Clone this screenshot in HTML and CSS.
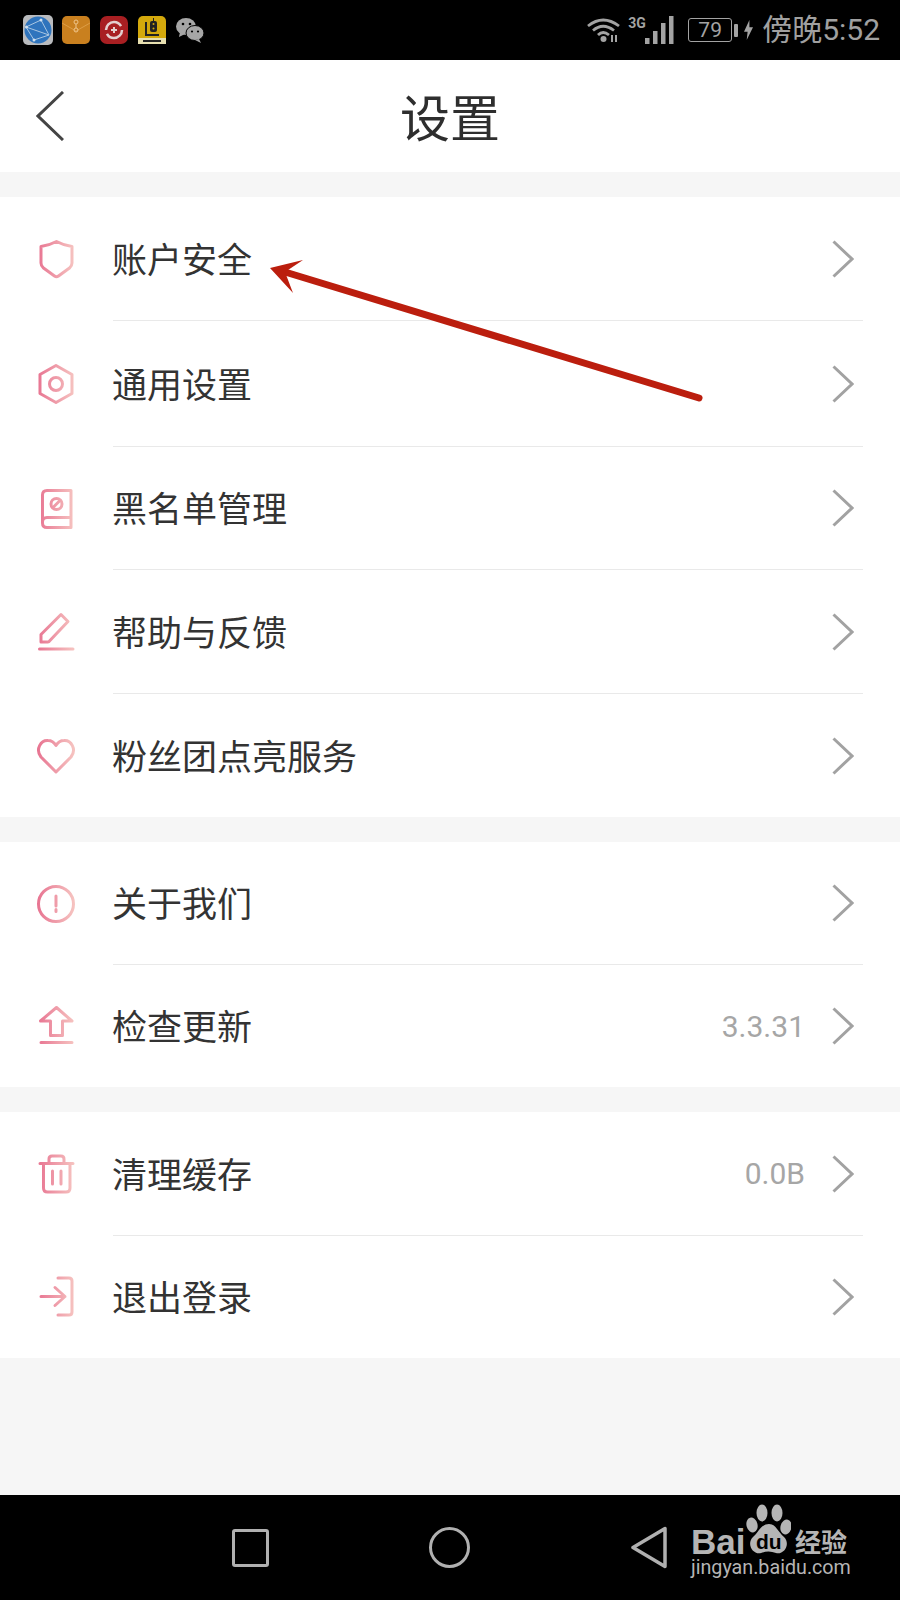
FILE: index.html
```html
<!DOCTYPE html>
<html lang="zh-CN">
<head>
<meta charset="utf-8">
<title>设置</title>
<link rel="stylesheet" href="styles.css">
</head>
<body>
<div class="page">
  <div class="statusbar">
    <div class="apps">
      <svg class="app app-a" viewBox="0 0 30 30"><rect width="30" height="30" rx="5" fill="#b9bbbe"/><circle cx="15" cy="15" r="13.500" fill="#2f74bd"/><path d="M3 12 L18 5 L26 20 L11 25 Z M3 12 L26 20" fill="none" stroke="#a9c6e2" stroke-width="1"/><circle cx="18" cy="5" r="1.500" fill="#cfe0f0"/><circle cx="3.500" cy="12" r="1.500" fill="#cfe0f0"/><circle cx="11" cy="25" r="1.500" fill="#cfe0f0"/></svg>
      <svg class="app app-b" viewBox="0 0 28 28"><rect width="28" height="28" rx="5" fill="#c9801f"/><path d="M0 7 L14 15 L28 7" fill="none" stroke="#dd9d46" stroke-width="1"/><circle cx="14" cy="6" r="2" fill="none" stroke="#eec48a"/><circle cx="14" cy="14" r="2" fill="none" stroke="#eec48a"/><path d="M14 8v4" stroke="#eec48a"/></svg>
      <svg class="app app-c" viewBox="0 0 28 28"><rect width="28" height="28" rx="7" fill="#a81f22"/><circle cx="14" cy="14" r="8" fill="none" stroke="#e4cfcf" stroke-width="2.500" stroke-dasharray="21 4"/><path d="M11 14h6M14 11v6" stroke="#e4cfcf" stroke-width="2"/></svg>
      <svg class="app app-d" viewBox="0 0 28 28"><rect width="28" height="28" rx="5" fill="#d4a90c"/><path d="M8 6V19H21" fill="none" stroke="#222" stroke-width="2"/><rect x="12" y="5" width="7" height="11" rx="2" fill="#222"/><path d="M15.500 2v3" stroke="#222"/><circle cx="15.500" cy="8" r="1" fill="#d4a90c"/><circle cx="15.500" cy="12.500" r="1" fill="#d4a90c"/><rect x="0" y="22" width="28" height="6" fill="#e6dfb0"/><rect x="5" y="24" width="18" height="2" fill="#222"/></svg>
      <svg class="app app-e" viewBox="0 0 28 26"><ellipse cx="10" cy="9.500" rx="10" ry="8.500" fill="#a6a6a6"/><path d="M4 15 L3 20 L9 17Z" fill="#a6a6a6"/><ellipse cx="19" cy="16" rx="9" ry="7.500" fill="#a6a6a6" stroke="#000" stroke-width="1"/><path d="M23 22 L25 26 L19 23Z" fill="#a6a6a6"/><circle cx="7" cy="7" r="1.300" fill="#000"/><circle cx="14" cy="7" r="1.300" fill="#000"/><circle cx="16" cy="14.500" r="1.100" fill="#000"/><circle cx="22" cy="14.500" r="1.100" fill="#000"/></svg>
    </div>
    <div class="indicators">
      <svg class="wifi" viewBox="0 0 34 26"><path d="M1 9 Q16 -3 32 9 M6 13.500 Q16 5 27 13.500 M11 18 Q16 13 22 18" fill="none" stroke="#a3a3a3" stroke-width="2.800"/><circle cx="16.500" cy="22" r="3" fill="#a3a3a3"/><path d="M25 18v7M29 18v7" stroke="#a3a3a3" stroke-width="2"/></svg>
      <span class="net">3G</span>
      <svg class="signal" viewBox="0 0 29 28"><rect x="0" y="22" width="4.500" height="6" fill="#a3a3a3"/><rect x="8" y="15" width="4.500" height="13" fill="#a3a3a3"/><rect x="16" y="7" width="4.500" height="21" fill="#a3a3a3"/><rect x="24" y="0" width="4.500" height="28" fill="#a3a3a3"/></svg>
      <div class="battery"><span class="battery-level">79</span></div>
      <span class="battery-tip"></span>
      <svg class="bolt" viewBox="0 0 10 22"><path d="M6 0 L0 13 H4 L3 22 L10 8 H6 Z" fill="#a3a3a3"/></svg>
      <span class="clock">傍晚5:52</span>
    </div>
  </div>

  <header class="topbar">
    <svg class="back" viewBox="0 0 28 50"><path d="M27 1 L2 25 L27 49" fill="none" stroke="#444" stroke-width="3"/></svg>
    <h1 class="title">设置</h1>
  </header>

  <section class="group group-a">
    <div class="row">
      <svg class="icon" viewBox="0 0 40 40"><defs><linearGradient id="pink" gradientUnits="userSpaceOnUse" x1="2" y1="0" x2="38" y2="0"><stop offset="0" stop-color="#e87592"/><stop offset="1" stop-color="#f6c3c0"/></linearGradient></defs><path class="ln" d="M20.500 2.500 Q28 6.500 36 7.500 V24 Q36 27 33.500 29 L22.500 37 Q20.500 38.500 18.500 37 L7.500 29 Q5 27 5 24 V7.500 Q13 6.500 20.500 2.500Z"/></svg>
      <div class="row-body"><span class="label">账户安全</span><svg class="chev" viewBox="0 0 22 38"><path d="M1.500 1.500 L20 19 L1.500 36.500"/></svg></div>
    </div>
    <div class="row">
      <svg class="icon" viewBox="0 0 40 40"><path class="ln" d="M20 1.500 L36 10.500 V29.500 L20 38.500 L4 29.500 V10.500Z"/><circle class="ln" cx="20" cy="20" r="6.500"/></svg>
      <div class="row-body"><span class="label">通用设置</span><svg class="chev" viewBox="0 0 22 38"><path d="M1.500 1.500 L20 19 L1.500 36.500"/></svg></div>
    </div>
    <div class="row">
      <svg class="icon" viewBox="0 0 40 40"><path class="ln" d="M35 1.500 H11 Q6.500 1.500 6.500 6 V34 Q6.500 38.500 11 38.500 H35Z M6.500 33 Q6.500 28.500 11 28.500 H35"/><circle class="ln" cx="20.500" cy="15" r="5.500"/><path class="ln" d="M17 18.500 L24 11.500"/></svg>
      <div class="row-body"><span class="label">黑名单管理</span><svg class="chev" viewBox="0 0 22 38"><path d="M1.500 1.500 L20 19 L1.500 36.500"/></svg></div>
    </div>
    <div class="row">
      <svg class="icon" viewBox="0 0 40 40"><path class="ln" d="M25 2.500 L32 9.500 L13.500 29 Q13 30 12 30 H5 V22.500 Z"/><path class="ln" d="M3.500 37 H37"/></svg>
      <div class="row-body"><span class="label">帮助与反馈</span><svg class="chev" viewBox="0 0 22 38"><path d="M1.500 1.500 L20 19 L1.500 36.500"/></svg></div>
    </div>
    <div class="row">
      <svg class="icon" viewBox="0 0 40 40"><path class="ln" d="M20 36 L5 21 C-1 13 5 4 12 4.500 C15.500 4.500 18.500 7 20 9.500 C21.500 7 24.500 4.500 28 4.500 C35 4 41 13 35 21Z"/></svg>
      <div class="row-body"><span class="label">粉丝团点亮服务</span><svg class="chev" viewBox="0 0 22 38"><path d="M1.500 1.500 L20 19 L1.500 36.500"/></svg></div>
    </div>
  </section>

  <section class="group group-b">
    <div class="row">
      <svg class="icon" viewBox="0 0 40 40"><circle class="ln" cx="20" cy="20" r="17.500"/><path class="ln" d="M20 12 V22 M20 25.500 V27.500"/></svg>
      <div class="row-body"><span class="label">关于我们</span><svg class="chev" viewBox="0 0 22 38"><path d="M1.500 1.500 L20 19 L1.500 36.500"/></svg></div>
    </div>
    <div class="row">
      <svg class="icon" viewBox="0 0 40 40"><path class="ln" d="M20.500 1.500 L36 15 H26.500 V29.500 H14.500 V15 H4.500 Z M5 36.500 H36"/></svg>
      <div class="row-body"><span class="label">检查更新</span><span class="value">3.3.31</span><svg class="chev" viewBox="0 0 22 38"><path d="M1.500 1.500 L20 19 L1.500 36.500"/></svg></div>
    </div>
  </section>

  <section class="group group-c">
    <div class="row">
      <svg class="icon" viewBox="0 0 40 40"><path class="ln" d="M4 9.500 H37 M7.500 9.500 V34 Q7.500 38 11.500 38 H30 Q34 38 34 34 V9.500 M13 9.500 V5 Q13 2 16 2 H25 Q28 2 28 5 V9.500 M16.500 17 V30 M25 17 V30"/></svg>
      <div class="row-body"><span class="label">清理缓存</span><span class="value">0.0B</span><svg class="chev" viewBox="0 0 22 38"><path d="M1.500 1.500 L20 19 L1.500 36.500"/></svg></div>
    </div>
    <div class="row">
      <svg class="icon" viewBox="0 0 40 40"><path class="ln" d="M5 19.500 H29 M19 10.500 L29 19.500 L19 28.500 M22 1 H33 Q36 1 36 4 V35 Q36 38 33 38 H22"/></svg>
      <div class="row-body"><span class="label">退出登录</span><svg class="chev" viewBox="0 0 22 38"><path d="M1.500 1.500 L20 19 L1.500 36.500"/></svg></div>
    </div>
  </section>

  <div class="filler"></div>

  <nav class="navbar">
    <span class="nav-square"></span>
    <span class="nav-circle"></span>
    <svg class="nav-back" viewBox="0 0 36 42"><path d="M34 2 V40 L2 21 Z" fill="none" stroke="#b0b0b0" stroke-width="3.500" stroke-linejoin="round"/></svg>
  </nav>

  <div class="watermark">
    <div class="wm-top">
      <span class="wm-bai">Bai</span>
      <svg class="wm-paw" viewBox="0 0 45 52"><ellipse cx="16" cy="10" rx="5.500" ry="8.500" fill="#b5b5b5"/><ellipse cx="31" cy="10" rx="5.500" ry="8.500" fill="#b5b5b5"/><ellipse cx="6" cy="22" rx="5.500" ry="7.500" fill="#b5b5b5" transform="rotate(-15 6 22)"/><ellipse cx="40" cy="24" rx="5.500" ry="7.500" fill="#b5b5b5" transform="rotate(15 40 24)"/><path d="M23 21 C30 21 32 29 38 34 C45 41 38 52 30 50 C25 48 20 48 15 50 C7 52 0 41 7 34 C13 29 15 21 23 21Z" fill="#b5b5b5"/></svg>
      <span class="wm-du">du</span>
      <span class="wm-cn">经验</span>
    </div>
    <span class="wm-url">jingyan.baidu.com</span>
  </div>

  <svg class="arrow" viewBox="0 0 900 1600"><path d="M699 398 L285 272" stroke="#bb1e0e" stroke-width="7" stroke-linecap="round" fill="none"/><path d="M270 268 L303 260 L285 272 L293 293 Z" fill="#bb1e0e"/></svg>
</div>
</body>
</html>
```
FILE: styles.css
```css
* { box-sizing: border-box; }
html, body { margin: 0; padding: 0; }
body { width: 900px; height: 1600px; overflow: hidden; background: #f6f6f6; font-family: "Noto Sans CJK SC", "Noto Sans", sans-serif; }
.page { position: relative; width: 900px; height: 1600px; display: flex; flex-direction: column; background: #f6f6f6; }

.statusbar { height: 60px; background: #000; display: flex; align-items: center; justify-content: space-between; padding: 0 20px 0 23px; flex: none; }
.apps { display: flex; align-items: center; }
.app { display: block; }
.app-a { width: 30px; height: 30px; }
.app-b { width: 28px; height: 28px; margin-left: 9px; }
.app-c { width: 28px; height: 28px; margin-left: 10px; }
.app-d { width: 28px; height: 28px; margin-left: 10px; }
.app-e { width: 28px; height: 26px; margin-left: 10px; }
.indicators { display: flex; align-items: center; color: #a3a3a3; }
.wifi { width: 34px; height: 26px; display: block; }
.net { font: 700 14px/14px "Roboto", sans-serif; margin: -14px 0 0 7px; width: 17px; }
.signal { width: 29px; height: 28px; display: block; }
.battery { width: 44px; height: 24px; margin-left: 14px; border: 1.500px solid #a3a3a3; border-radius: 3px; display: flex; align-items: center; justify-content: center; }
.battery-level { font: 400 21px/21px "Roboto", sans-serif; }
.battery-tip { width: 4px; height: 13px; margin-left: 2px; background: #a3a3a3; border-radius: 1px; }
.bolt { width: 9px; height: 22px; margin-left: 6px; display: block; }
.clock { font: 400 30px/34px "Roboto", "Noto Sans CJK SC", sans-serif; margin-left: 9px; color: #a0a0a0; }

.topbar { height: 112px; background: #fff; display: flex; align-items: center; justify-content: center; position: relative; flex: none; }
.back { position: absolute; left: 36px; top: 31px; width: 28px; height: 50px; }
.title { margin: 0 0 2px; font-weight: 400; font-size: 50px; line-height: 60px; color: #2e2e2e; }

.group { background: #fff; display: grid; flex: none; }
.group-a { margin-top: 25px; grid-template-rows: 124px 126px 123px 124px 123px; }
.group-b { margin-top: 25px; grid-template-rows: 123px 122px; }
.group-c { margin-top: 25px; grid-template-rows: 124px 122px; }

.row { display: flex; align-items: center; padding-left: 36px; }
.icon { width: 40px; height: 40px; flex: none; display: block; overflow: visible; }
.ln { fill: none; stroke: url(#pink); stroke-width: 3; stroke-linejoin: round; stroke-linecap: round; }
.row-body { flex: 1; align-self: stretch; margin: 0 37px; padding-right: 9px; display: flex; align-items: center; border-bottom: 1px solid #e9e9e9; }
.row:last-child .row-body { border-bottom: 0; }
.label { flex: 1; font-size: 35px; line-height: 44px; color: #333; padding-bottom: 2px; margin-left: -1px; }
.value { font: 400 30px/36px "Roboto", sans-serif; color: #a6a6a6; margin-right: 27px; padding-top: 1px; }
.chev { width: 22px; height: 38px; flex: none; display: block; }
.chev path { fill: none; stroke: #a2a2a2; stroke-width: 3; }

.filler { flex: 1; }
.navbar { height: 105px; background: #000; display: flex; align-items: center; padding: 0 0 0 232px; flex: none; }
.nav-square { width: 37px; height: 38px; border: 3.500px solid #b0b0b0; border-radius: 3px; }
.nav-circle { width: 41px; height: 41px; border: 3.500px solid #b0b0b0; border-radius: 50%; margin-left: 160px; }
.nav-back { width: 36px; height: 43px; margin-left: 161px; display: block; }

.watermark { position: absolute; left: 691px; top: 1503px; width: 170px; color: #b5b5b5; }
.wm-top { position: relative; height: 56px; }
.wm-bai { position: absolute; left: 0; top: 24px; font: 700 35px/29px "Liberation Sans", sans-serif; }
.wm-paw { position: absolute; left: 55px; top: 0; width: 45px; height: 52px; }
.wm-du { position: absolute; left: 65px; top: 29px; font: 700 21px/20px "Liberation Sans", sans-serif; color: #000; }
.wm-cn { position: absolute; left: 104px; top: 24px; font-size: 26px; line-height: 28px; font-weight: 700; white-space: nowrap; }
.wm-url { display: block; font: 400 19.700px/24px "Roboto", sans-serif; margin-top: -3px; white-space: nowrap; }

.arrow { position: absolute; left: 0; top: 0; width: 900px; height: 1600px; pointer-events: none; }
```
